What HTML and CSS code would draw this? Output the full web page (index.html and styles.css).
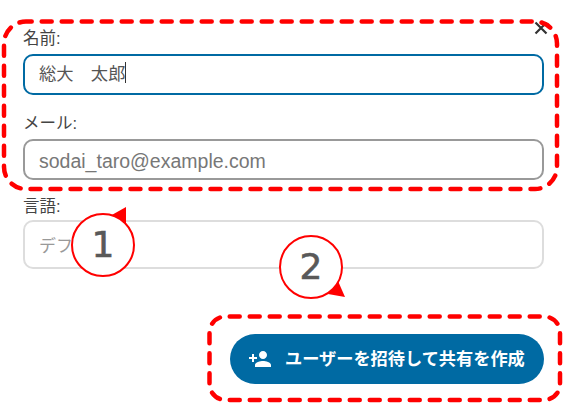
FILE: index.html
```html
<!DOCTYPE html>
<html lang="ja">

<head>
  <meta charset="utf-8">
  <title>ユーザーを招待</title>
  <link rel="stylesheet" href="styles.css">
</head>

<body>
  <div class="dialog">
    <button class="close-button" aria-label="閉じる">
      <svg width="16" height="16" viewBox="0 0 16 16">
        <path d="M2.5 2.5 L13.5 13.5 M13.5 2.5 L2.5 13.5" stroke="#333" stroke-width="2.2" fill="none" />
      </svg>
    </button>

    <div class="field">
      <label class="field-label">名前:</label>
      <div class="text-input text-input-focus">総大　太郎<span class="caret"></span></div>
    </div>
    <div class="field field-mail">
      <label class="field-label">メール:</label>
      <div class="text-input text-input-hover">sodai_taro@example.com</div>
    </div>
    <div class="field field-last">
      <label class="field-label">言語:</label>
      <div class="text-input text-input-select">デフォルト</div>
    </div>

    <div class="actions">
      <button class="create-button">
        <svg class="create-icon" width="24" height="24" viewBox="0 0 24 24">
          <path fill="#fff" d="M15 12c2.21 0 4-1.79 4-4s-1.79-4-4-4-4 1.79-4 4 1.79 4 4 4zm-9-2V7H4v3H1v2h3v3h2v-3h3v-2H6zm9 4c-2.67 0-8 1.34-8 4v2h16v-2c0-2.66-5.33-4-8-4z" />
        </svg>
        <span class="create-label">ユーザーを招待して共有を作成</span>
      </button>
    </div>
  </div>

  <!-- red marks drawn on top of the screenshot -->
  <svg class="marks" width="565" height="403" viewBox="0 0 565 403">
    <rect class="dash dash-fields" x="4" y="21.5" width="553" height="167.5" rx="22" />
    <rect class="dash dash-button" x="209.5" y="316.5" width="350.5" height="83.5" rx="16" />
    <polygon class="tail" points="126,207 110,216 126,226" />
    <polygon class="tail" points="345,297 338,281 328,294" />
  </svg>

  <div class="callout callout-one">1</div>
  <div class="callout callout-two">2</div>
</body>

</html>
```

FILE: styles.css
```css
body {
  margin: 0;
  background-color: #fff;
  font-family: "Liberation Sans", "Noto Sans CJK JP", sans-serif;
  color: #444;
}

.dialog {
  width: 565px;
  height: 403px;
  box-sizing: border-box;
  padding: 30px 21px 0 23px;
  overflow: hidden;
}

.close-button {
  position: absolute;
  left: 533px;
  top: 20px;
  width: 16px;
  height: 16px;
  padding: 0;
  border: none;
  background: none;
}

.close-button svg {
  display: block;
}

.field {
  margin-bottom: 20px;
}

.field-mail {
  margin-bottom: 16px;
}

.field-last {
  margin-bottom: 0;
}

.field-label {
  display: block;
  height: 24px;
  font-size: 16.5px;
  line-height: 17px;
  color: #444;
}

.field-last .field-label {
  box-sizing: border-box;
  padding-top: 2px;
}

.text-input {
  box-sizing: border-box;
  display: flex;
  align-items: center;
  height: 41px;
  padding: 0 14px;
  border: 2px solid #ccc;
  border-radius: 10px;
  font-size: 19.5px;
  white-space: nowrap;
  overflow: hidden;
}

.text-input-focus {
  padding-bottom: 5px;
  border-color: #006aa3;
  color: #555;
  font-size: 17.3px;
}

.text-input-hover {
  padding-top: 4px;
  border-color: #999;
  color: #777;
}

.text-input-select {
  height: 49px;
  border-color: #ddd;
  color: #999;
  font-size: 17px;
}

.caret {
  display: inline-block;
  width: 1px;
  height: 21px;
  background-color: #333;
}

.actions {
  display: flex;
  justify-content: flex-end;
  margin-top: 65px;
}

.create-button {
  display: flex;
  align-items: center;
  gap: 13px;
  width: 314px;
  height: 50px;
  box-sizing: border-box;
  padding: 0 0 0 18px;
  border: none;
  border-radius: 25px;
  background-color: #006aa3;
  color: #fff;
  font-family: inherit;
  font-size: 17.2px;
  font-weight: bold;
  white-space: nowrap;
}

.create-label {
  margin-bottom: 4px;
}

.marks {
  position: absolute;
  left: 0;
  top: 0;
}

.dash {
  fill: none;
  stroke: #f00;
  stroke-width: 4.5;
  stroke-linecap: round;
  stroke-dasharray: 10 10;
}

.dash-fields {
  stroke-dashoffset: 4.3;
}

.dash-button {
  stroke-dashoffset: -4.2;
}

.tail {
  fill: #f00;
}

.callout {
  position: absolute;
  box-sizing: border-box;
  width: 64px;
  height: 64px;
  border: 2px solid #f00;
  border-radius: 50%;
  background-color: #fff;
  text-align: center;
  font-family: "DejaVu Sans", sans-serif;
  font-size: 36px;
  line-height: 60px;
  color: #595959;
  -webkit-text-stroke: 0.6px #595959;
}

.callout-one {
  left: 71px;
  top: 213px;
}

.callout-two {
  left: 279px;
  top: 235px;
}
```
